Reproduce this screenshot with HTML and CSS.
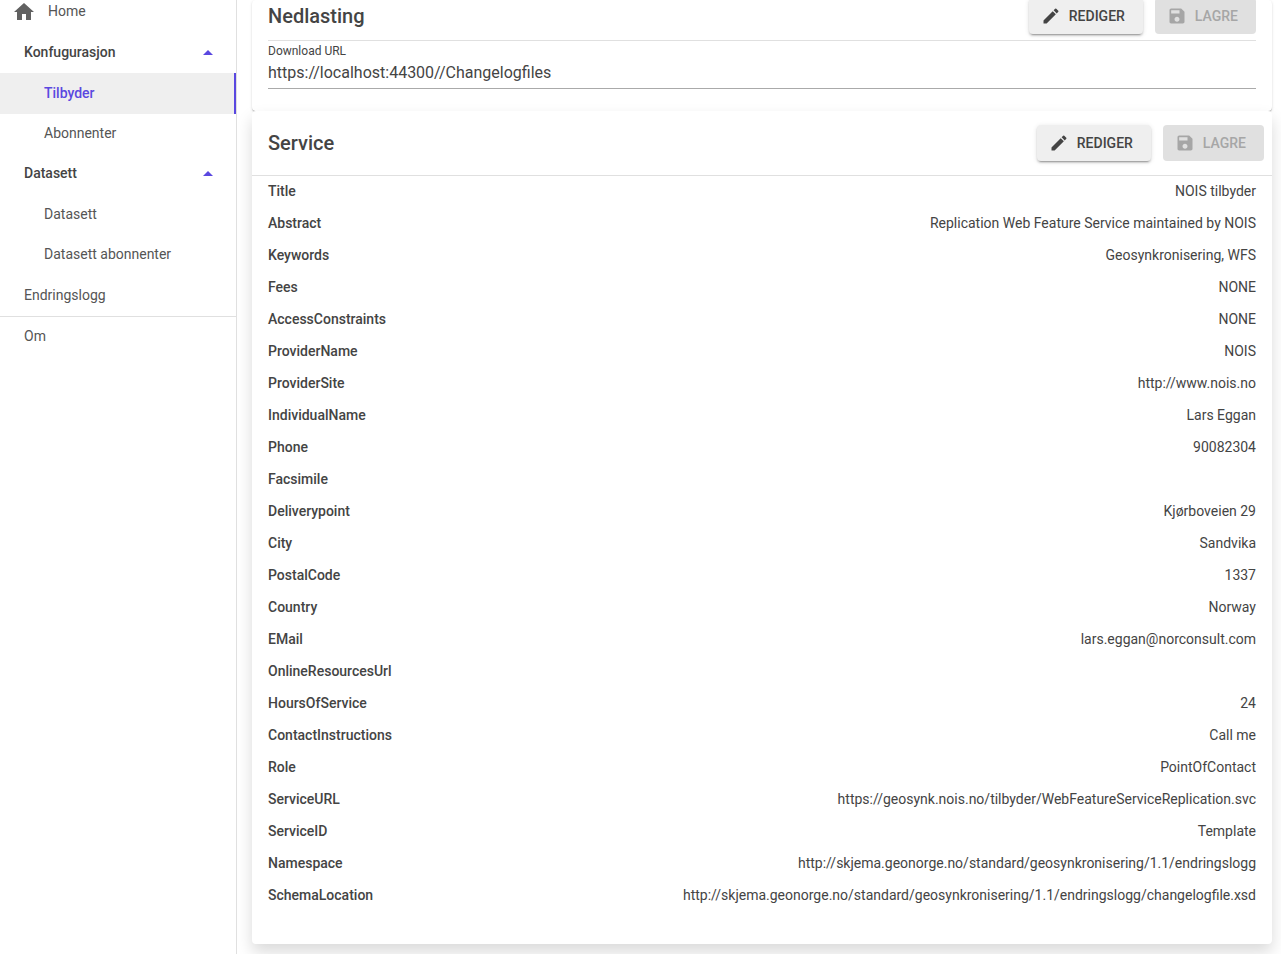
FILE: index.html
```html
<!DOCTYPE html>
<html lang="no">
<head>
<meta charset="utf-8">
<title>Tilbyder</title>
<link rel="stylesheet" href="styles.css">
</head>
<body>
<svg class="sprite" aria-hidden="true">
  <symbol id="home" viewBox="0 0 24 24"><path d="M10 20v-6h4v6h5v-8h3L12 3 2 12h3v8z"/></symbol>
  <symbol id="edit" viewBox="0 0 24 24"><path d="M3 17.25V21h3.75L17.81 9.94l-3.75-3.75L3 17.25zM20.71 7.04a1 1 0 0 0 0-1.41l-2.34-2.34a1 1 0 0 0-1.41 0l-1.83 1.83 3.75 3.75 1.83-1.83z"/></symbol>
  <symbol id="save" viewBox="0 0 24 24"><path d="M17 3H5c-1.110 0-2 .9-2 2v14c0 1.100.890 2 2 2h14c1.100 0 2-.9 2-2V7l-4-4zm-5 16c-1.660 0-3-1.340-3-3s1.340-3 3-3 3 1.340 3 3-1.340 3-3 3zm3-10H5V5h10v4z"/></symbol>
</svg>
<div class="layout">
  <nav class="sidebar">
    <a class="nav-home" href="#"><svg class="home-icon"><use href="#home"/></svg>Home</a>
    <button class="nav-group" type="button" aria-expanded="true">Konfugurasjon<span class="caret"></span></button>
    <a class="nav-sub active" href="#">Tilbyder</a>
    <a class="nav-sub" href="#">Abonnenter</a>
    <button class="nav-group" type="button" aria-expanded="true">Datasett<span class="caret"></span></button>
    <a class="nav-sub" href="#">Datasett</a>
    <a class="nav-sub" href="#">Datasett abonnenter</a>
    <a class="nav-item" href="#">Endringslogg</a>
    <a class="nav-item divided" href="#">Om</a>
  </nav>
  <main class="content">
    <section class="card download">
      <header class="card-head">
        <h2>Nedlasting</h2>
        <div class="actions">
          <button class="btn" type="button"><svg><use href="#edit"/></svg>REDIGER</button>
          <button class="btn" type="button" disabled><svg><use href="#save"/></svg>LAGRE</button>
        </div>
      </header>
      <div class="field">
        <label for="url">Download URL</label>
        <input id="url" type="text" value="https://localhost:44300//Changelogfiles" readonly>
      </div>
    </section>
    <section class="card service">
      <header class="card-head">
        <h2>Service</h2>
        <div class="actions">
          <button class="btn" type="button"><svg><use href="#edit"/></svg>REDIGER</button>
          <button class="btn" type="button" disabled><svg><use href="#save"/></svg>LAGRE</button>
        </div>
      </header>
      <table class="details">
        <tr><th scope="row">Title</th><td>NOIS tilbyder</td></tr>
        <tr><th scope="row">Abstract</th><td>Replication Web Feature Service maintained by NOIS</td></tr>
        <tr><th scope="row">Keywords</th><td>Geosynkronisering, WFS</td></tr>
        <tr><th scope="row">Fees</th><td>NONE</td></tr>
        <tr><th scope="row">AccessConstraints</th><td>NONE</td></tr>
        <tr><th scope="row">ProviderName</th><td>NOIS</td></tr>
        <tr><th scope="row">ProviderSite</th><td>http://www.nois.no</td></tr>
        <tr><th scope="row">IndividualName</th><td>Lars Eggan</td></tr>
        <tr><th scope="row">Phone</th><td>90082304</td></tr>
        <tr><th scope="row">Facsimile</th><td></td></tr>
        <tr><th scope="row">Deliverypoint</th><td>Kjørboveien 29</td></tr>
        <tr><th scope="row">City</th><td>Sandvika</td></tr>
        <tr><th scope="row">PostalCode</th><td>1337</td></tr>
        <tr><th scope="row">Country</th><td>Norway</td></tr>
        <tr><th scope="row">EMail</th><td>lars.eggan@norconsult.com</td></tr>
        <tr><th scope="row">OnlineResourcesUrl</th><td></td></tr>
        <tr><th scope="row">HoursOfService</th><td>24</td></tr>
        <tr><th scope="row">ContactInstructions</th><td>Call me</td></tr>
        <tr><th scope="row">Role</th><td>PointOfContact</td></tr>
        <tr><th scope="row">ServiceURL</th><td>https://geosynk.nois.no/tilbyder/WebFeatureServiceReplication.svc</td></tr>
        <tr><th scope="row">ServiceID</th><td>Template</td></tr>
        <tr><th scope="row">Namespace</th><td>http://skjema.geonorge.no/standard/geosynkronisering/1.1/endringslogg</td></tr>
        <tr><th scope="row">SchemaLocation</th><td>http://skjema.geonorge.no/standard/geosynkronisering/1.1/endringslogg/changelogfile.xsd</td></tr>
      </table>
    </section>
  </main>
</div>
</body>
</html>
```
FILE: styles.css
```css
* { box-sizing: border-box; }
body { margin: 0; background: #fff; color: #444; font: 14px/20px Roboto, sans-serif; }
a { color: inherit; text-decoration: none; }
button, input { font: inherit; color: inherit; }
.sprite { display: none; }
.layout { display: flex; min-height: 100vh; overflow: hidden; }

.sidebar { width: 237px; flex: none; display: flex; flex-direction: column; border-right: 1px solid #e0e0e0; color: #555; }
.sidebar > * { display: flex; align-items: center; height: 40px; padding: 0 23px 2px 24px; flex: none; }
.sidebar .nav-home { height: 33px; padding: 0 12px 12px; gap: 12px; }
.home-icon { width: 24px; height: 24px; fill: #616161; align-self: flex-start; }
.nav-group { border: 0; background: none; font-weight: 500; color: #444; justify-content: space-between; }
.caret { border: 5px solid transparent; border-top: 0; border-bottom-color: #5a48e0; }
.sidebar .nav-sub { padding-left: 44px; }
.sidebar .nav-group + .nav-sub, .sidebar .nav-item { height: 41px; }
.sidebar .active { background: #efefef; color: #5a48e0; font-weight: 500; border-right: 2px solid #5a48e0; }
.sidebar .divided { border-top: 1px solid #e0e0e0; }

.content { flex: 1; min-width: 0; padding: 0 9px 10px 15px; }
.card { background: #fff; border-radius: 4px; }
.card-head { display: flex; align-items: center; justify-content: space-between; border-bottom: 1px solid #e0e0e0; }
h2 { margin: 0; font-size: 20px; line-height: 32px; font-weight: 500; }
.actions { display: flex; gap: 12px; }
.btn { display: flex; align-items: center; gap: 8px; height: 36px; padding: 0 18px 1px 12px; border: 0; border-radius: 4px; background: #efefef; font-weight: 500; box-shadow: 0 3px 1px -2px rgba(0,0,0,.2), 0 2px 2px rgba(0,0,0,.14), 0 1px 5px rgba(0,0,0,.12); }
.btn svg { width: 20px; height: 20px; fill: currentColor; }
.btn:disabled { background: #e0e0e0; color: #a6a6a6; box-shadow: none; }

.download { padding: 0 16px 22px; box-shadow: 0 2px 1px -1px rgba(0,0,0,.2), 0 1px 1px rgba(0,0,0,.14), 0 1px 3px rgba(0,0,0,.12); }
.download .card-head { height: 41px; padding-bottom: 8px; }
.download .actions { align-self: flex-end; margin-bottom: -2px; }
.field { display: flex; flex-direction: column; border-bottom: 1px solid #aaa; }
.field label { font-size: 12px; line-height: 20px; }
.field input { width: 100%; height: 27px; padding: 0 0 4px; border: 0; outline: 0; background: none; font-size: 16px; }
.service { position: relative; padding-bottom: 32px; box-shadow: 0 8px 16px rgba(0,0,0,.15); }
.service .card-head { height: 65px; padding: 0 8px 0 16px; }
.details { width: 100%; border-collapse: collapse; }
.details th, .details td { height: 32px; padding: 0 16px 2px; text-align: right; font-weight: 400; }
.details th { text-align: left; font-weight: 500; }
```
